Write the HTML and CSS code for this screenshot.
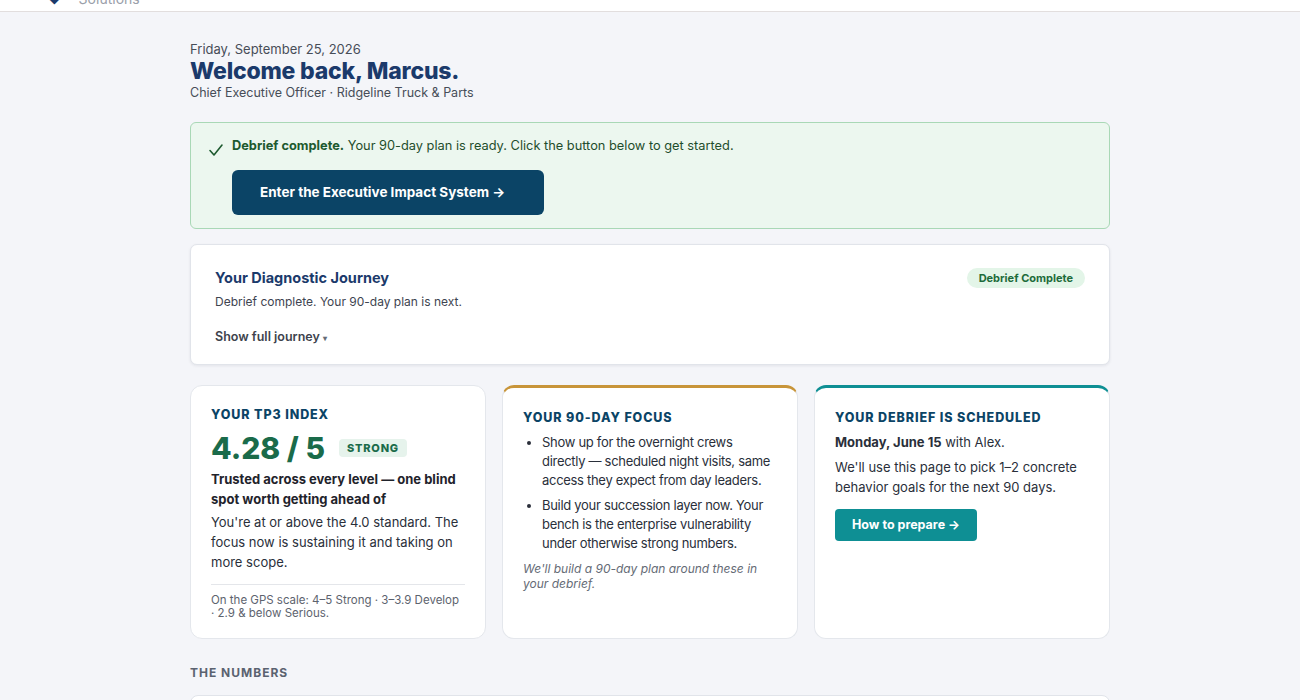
FILE: index.html
```html
<!DOCTYPE html>
<html lang="en">
<head>
    <meta charset="UTF-8">
    <meta name="viewport" content="width=device-width, initial-scale=1.0">
    <title>Dashboard</title>
    <link rel="stylesheet" href="styles.css">
</head>
<body>
    <header class="topbar">
        <div class="topbar-inner">
            <span class="brand-mark">&#9670;</span>
            <span class="brand-name">Solutions</span>
        </div>
    </header>

    <main class="page">
        <div class="greeting">
            <div class="date">Friday, September 25, 2026</div>
            <h1 class="welcome">Welcome back, Marcus.</h1>
            <div class="role">Chief Executive Officer · Ridgeline Truck &amp; Parts</div>
        </div>

        <section class="notice">
            <svg class="notice-check" width="16" height="16" viewBox="0 0 16 16">
                <path d="M2 8.5 L6 13 L14 3" fill="none" stroke="#1d5a2f" stroke-width="1.6" stroke-linecap="round" stroke-linejoin="round"/>
            </svg>
            <div class="notice-body">
                <p class="notice-text"><strong>Debrief complete.</strong> Your 90-day plan is ready. Click the button below to get started.</p>
                <a class="btn-primary" href="#">Enter the Executive Impact System &#8594;</a>
            </div>
        </section>

        <section class="journey">
            <div class="journey-head">
                <div>
                    <h2 class="journey-title">Your Diagnostic Journey</h2>
                    <p class="journey-sub">Debrief complete. Your 90-day plan is next.</p>
                </div>
                <span class="pill">Debrief Complete</span>
            </div>
            <div class="journey-toggle">Show full journey <span class="caret">&#9662;</span></div>
        </section>

        <div class="cards">
            <div class="card">
                <h3 class="card-label">Your TP3 Index</h3>
                <div class="score-row">
                    <span class="score">4.28 / 5</span>
                    <span class="tag">Strong</span>
                </div>
                <p class="card-lead">Trusted across every level — one blind spot worth getting ahead of</p>
                <p class="card-text">You're at or above the 4.0 standard. The focus now is sustaining it and taking on more scope.</p>
                <p class="card-foot">On the GPS scale: 4–5 Strong · 3–3.9 Develop · 2.9 &amp; below Serious.</p>
            </div>

            <div class="card card-gold">
                <h3 class="card-label">Your 90-Day Focus</h3>
                <ul class="focus-list">
                    <li>Show up for the overnight crews<br>directly — scheduled night visits, same access they expect from day leaders.</li>
                    <li>Build your succession layer now. Your bench is the enterprise vulnerability under otherwise strong numbers.</li>
                </ul>
                <p class="card-note">We'll build a 90-day plan around these in your debrief.</p>
            </div>

            <div class="card card-teal">
                <h3 class="card-label">Your Debrief Is Scheduled</h3>
                <p class="card-text"><strong>Monday, June 15</strong> with Alex.</p>
                <p class="card-text spaced">We'll use this page to pick 1–2 concrete behavior goals for the next 90 days.</p>
                <a class="btn-teal" href="#">How to prepare &#8594;</a>
            </div>
        </div>

        <h4 class="section-label">The Numbers</h4>
        <div class="numbers"></div>
    </main>
</body>
</html>
```

FILE: styles.css
```css
/* Base */
body {
    margin: 0;
    font-family: Inter, "Noto Sans", Arial, sans-serif;
    background: #f4f5f9;
    color: #2a2f3a;
}
p {
    margin: 0;
}

/* Top bar (scrolled, only its lower edge shows) */
.topbar {
    height: 11px;
    overflow: hidden;
    background: #ffffff;
    border-bottom: 1px solid #e2dede;
}
.topbar-inner {
    display: flex;
    align-items: center;
    gap: 18px;
    margin-top: -12px;
    padding-left: 48px;
    height: 20px;
}
.brand-mark {
    font-size: 12px;
    color: #1b3a6b;
}
.brand-name {
    font-size: 14px;
    color: #9aa0aa;
}

/* Page column */
.page {
    width: 920px;
    margin: 0 auto;
    padding-top: 29px;
}
.greeting {
    margin-bottom: 21px;
}
.date {
    font-size: 13px;
    color: #474d58;
    line-height: 16px;
}
.welcome {
    margin: 1px 0 0;
    font-size: 23px;
    font-weight: 800;
    color: #1b3a6b;
    line-height: 27px;
    letter-spacing: -0.2px;
}
.role {
    font-size: 12.5px;
    color: #474d58;
    line-height: 16px;
}

/* Green notice */
.notice {
    display: flex;
    gap: 8px;
    background: #ecf7ef;
    border: 1px solid #a9d8b6;
    border-radius: 6px;
    padding: 14px 17px 13px 17px;
}
.notice-check {
    margin-top: 5px;
    flex-shrink: 0;
}
.notice-text {
    font-size: 12.8px;
    color: #1f4d2c;
    line-height: 17px;
}
.notice-text strong {
    color: #1d5a2f;
}
.btn-primary {
    display: inline-block;
    margin-top: 16px;
    background: #0b4466;
    color: #ffffff;
    font-size: 13.5px;
    font-weight: 700;
    text-decoration: none;
    padding: 14px 28px 15px;
    border-radius: 6px;
    width: 256px;
}

/* Diagnostic journey */
.journey {
    margin-top: 15px;
    background: #ffffff;
    border: 1px solid #e1e4ea;
    border-radius: 7px;
    box-shadow: 0 1px 3px rgba(20, 30, 50, 0.08);
    padding: 23px 24px 20px;
}
.journey-head {
    display: flex;
    justify-content: space-between;
    align-items: flex-start;
}
.journey-title {
    margin: 0;
    font-size: 14.5px;
    font-weight: 700;
    color: #1b3a6b;
    line-height: 20px;
}
.journey-sub {
    margin-top: 6px;
    font-size: 12px;
    color: #3e4450;
}
.pill {
    margin-top: 0;
    background: #e3f5e8;
    color: #1d6b3a;
    font-size: 11px;
    font-weight: 700;
    padding: 3px 12px;
    border-radius: 10px;
}
.journey-toggle {
    margin-top: 20px;
    font-size: 12.5px;
    font-weight: 600;
    color: #3e434d;
}
.caret {
    font-size: 8px;
    color: #666c77;
}

/* Three cards */
.cards {
    display: grid;
    grid-template-columns: repeat(3, 1fr);
    gap: 16px;
    margin-top: 20px;
}
.card {
    background: #ffffff;
    border: 1px solid #e4e7ec;
    border-radius: 12px;
    padding: 21px 20px 24px;
    height: 254px;
    box-sizing: border-box;
}
.card-gold {
    border-top: 3px solid #c8953a;
    padding: 22px 14px 24px 20px;
}
.card-teal {
    border-top: 3px solid #0e8f94;
    padding-top: 22px;
}
.card-label {
    margin: 0;
    font-size: 12.5px;
    font-weight: 800;
    color: #0b4466;
    text-transform: uppercase;
    letter-spacing: 0.9px;
    line-height: 16px;
}
.score-row {
    display: flex;
    align-items: center;
    gap: 14px;
    margin-top: 7px;
}
.score {
    font-size: 30px;
    font-weight: 800;
    color: #1a6b4a;
    line-height: 36px;
}
.tag {
    background: #e6f3ec;
    color: #1a6b4a;
    font-size: 11px;
    font-weight: 800;
    letter-spacing: 0.8px;
    text-transform: uppercase;
    padding: 2px 8px;
    border-radius: 4px;
}
.card-lead {
    margin-top: 3px;
    font-size: 13px;
    font-weight: 700;
    color: #1f232b;
    line-height: 20px;
}
.card-text {
    margin-top: 3px;
    font-size: 13px;
    color: #2a2f3a;
    line-height: 20px;
}
.card-teal .card-text {
    margin-top: 6px;
}
.card-teal .spaced {
    margin-top: 5px;
}
.card-foot {
    margin-top: 12px;
    padding-top: 9px;
    border-top: 1px solid #e4e6ea;
    font-size: 11.5px;
    color: #5d636e;
    line-height: 13px;
}
.focus-list {
    margin: 7px 0 0;
    padding-left: 19px;
    font-size: 13px;
    line-height: 19px;
    letter-spacing: -0.3px;
    color: #2a2f3a;
}
.focus-list li {
    margin-bottom: 6px;
}
.card-note {
    margin-top: 8px;
    font-size: 12px;
    font-style: italic;
    color: #656b76;
    line-height: 15px;
}
.btn-teal {
    display: inline-block;
    margin-top: 12px;
    background: #0e8f94;
    color: #ffffff;
    font-size: 12.5px;
    font-weight: 700;
    text-decoration: none;
    padding: 8px 17px 9px;
    border-radius: 4px;
}

/* Numbers section */
.section-label {
    margin: 26px 0 0;
    font-size: 12px;
    font-weight: 700;
    color: #5a6270;
    letter-spacing: 1px;
    text-transform: uppercase;
}
.numbers {
    margin-top: 15px;
    height: 60px;
    background: #ffffff;
    border: 1px solid #e1e4ea;
    border-radius: 8px;
}
```
